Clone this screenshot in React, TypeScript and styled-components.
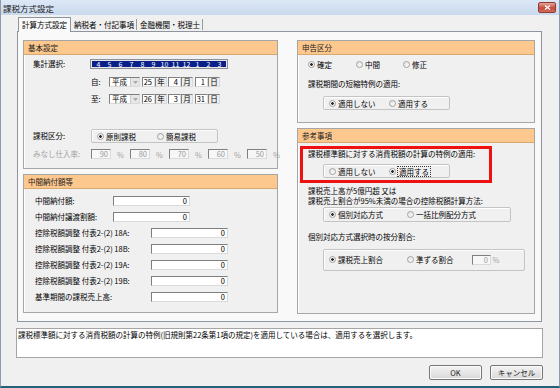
import React from 'react';
import styled, { createGlobalStyle } from 'styled-components';

const GlobalStyle = createGlobalStyle`
  html, body { margin: 0; padding: 0; }
  body {
    font-family: "Noto Sans CJK JP", "Noto Sans", sans-serif;
    font-size: 7.5px;
    color: #000;
    background: #fff;
  }
  * { box-sizing: border-box; }
`;

const Window = styled.div`
  width: 560px;
  height: 388px;
  display: flex;
  flex-direction: column;
  background: #f0f0f0;
  border-left: 1px solid #8e9bab;
  border-right: 1px solid #8e9bab;
  border-bottom: 2px solid #24627c;
`;

const TitleBar = styled.div`
  height: 15px;
  flex: none;
  display: flex;
  align-items: center;
  justify-content: space-between;
  padding: 0 3px 0 2px;
  background: linear-gradient(#dde8f6, #c9d9ed);
  font-size: 8.5px;
  color: #1a1a1a;
`;

const CloseBtn = styled.div`
  width: 18px;
  height: 11px;
  border: 1px solid #8c3a32;
  border-radius: 2px;
  background: linear-gradient(#e3a59a, #c84a3d 55%, #d46d5e);
  display: flex;
  align-items: center;
  justify-content: center;
`;

const Body = styled.div`
  flex: 1;
  display: flex;
  flex-direction: column;
  padding: 2px 16px 0 15px;
`;

const TabStrip = styled.div`
  height: 15px;
  display: flex;
  align-items: flex-end;
  padding-left: 2px;
  margin-bottom: -1px;
  position: relative;
  z-index: 1;
`;

const Tab = styled.div<{ $active?: boolean }>`
  padding: 0 3px;
  white-space: nowrap;
  ${p =>
    p.$active
      ? `height: 15px; line-height: 14px; background: #f9f9f9; border: 1px solid #8f959f; border-bottom: none;`
      : `height: 11px; line-height: 11px; margin-bottom: 2px; border-right: 1px solid #9a9a9a; padding: 0 2px 0 3px;`}
`;

const Panel = styled.div`
  height: 291px;
  margin: 0 1px;
  border: 1px solid #8f959f;
  background: #f9f9f9;
  padding: 8px 6px 0 5px;
  display: flex;
  gap: 19px;
`;

const Column = styled.div<{ $w: number }>`
  width: ${p => p.$w}px;
  display: flex;
  flex-direction: column;
  gap: 5px;
`;

const GroupBox = styled.div<{ $h: number }>`
  height: ${p => p.$h}px;
  border: 1px solid #a6a6a6;
  box-shadow: inset 1px 1px 0 #fff;
  background: #f0f0f0;
  display: flex;
  flex-direction: column;
`;

const GroupHead = styled.div`
  height: 14px;
  line-height: 13px;
  padding-left: 4px;
  background: #fdc88e;
  border-bottom: 1px solid #d9a871;
  color: #222;
`;

const FieldRow = styled.div<{ $mt: number; $h?: number; $pl?: number }>`
  display: flex;
  align-items: center;
  margin-top: ${p => p.$mt}px;
  height: ${p => p.$h ?? 10}px;
  padding-left: ${p => p.$pl ?? 9}px;
  white-space: nowrap;
`;

const Caption = styled.div<{ $w?: number; $dim?: boolean }>`
  flex: none;
  width: ${p => (p.$w ? `${p.$w}px` : 'auto')};
  color: ${p => (p.$dim ? '#a3a3a3' : '#000')};
  line-height: 10px;
`;

const MonthList = styled.div`
  width: 138px;
  height: 10px;
  display: flex;
  background: #0a2089;
  border: 1px solid #8a8f98;
  box-shadow: inset 0 0 0 1px #e8e8e8;
  padding: 1px 2px;
`;

const MonthCell = styled.div`
  flex: 1;
  color: #fff;
  text-align: center;
  line-height: 7px;
  font-size: 7px;
`;

const Sunken = styled.div<{ $w: number; $ml?: number }>`
  width: ${p => p.$w}px;
  height: 10px;
  margin-left: ${p => p.$ml ?? 0}px;
  border: 1px solid;
  border-color: #7f7f7f #dadada #dadada #7f7f7f;
  line-height: 8px;
  flex: none;
`;

const Combo = styled(Sunken)`
  background: #fff;
  display: flex;
  padding-left: 2px;
  justify-content: space-between;
`;

const ComboArrow = styled.div`
  width: 9px;
  background: #e6e6e6;
  border-left: 1px solid #c8c8c8;
  display: flex;
  align-items: center;
  justify-content: center;
`;

const NumBox = styled(Sunken)<{ $off?: boolean }>`
  background: ${p => (p.$off ? '#f7f7f7' : '#fff')};
  color: ${p => (p.$off ? '#9a9a9a' : '#000')};
  text-align: right;
  padding-right: 2px;
`;

const Unit = styled(Sunken)`
  background: #ececec;
  text-align: center;
`;

const Pct = styled.div<{ $w: number }>`
  width: ${p => p.$w}px;
  text-align: center;
  color: #a3a3a3;
  flex: none;
`;

const RadioGroup = styled.div<{ $w: number; $h?: number; $mt: number; $ml: number }>`
  width: ${p => p.$w}px;
  height: ${p => p.$h ?? 14}px;
  margin-top: ${p => p.$mt}px;
  margin-left: ${p => p.$ml}px;
  border: 1px solid #c4c4c4;
  box-shadow: inset 1px 1px 0 #fff;
  border-radius: 2px;
  display: flex;
  align-items: center;
  padding-left: 5px;
  white-space: nowrap;
  flex: none;
`;

const RadioItem = styled.div<{ $w: number }>`
  width: ${p => p.$w}px;
  display: flex;
  align-items: center;
  flex: none;
`;

const RadioDot = styled.span<{ $on?: boolean }>`
  width: 7px;
  height: 7px;
  border-radius: 50%;
  border: 1px solid #a2a2a2;
  background: ${p =>
    p.$on
      ? 'radial-gradient(circle, #2a2a2a 0 1.2px, #f4f4f4 1.5px)'
      : 'linear-gradient(135deg, #e2e2e2, #fdfdfd)'};
  margin-right: 2px;
  flex: none;
`;

const FocusText = styled.span`
  outline: 1px dotted #333;
  outline-offset: 0;
  padding: 0 1px;
  line-height: 9px;
`;

const Highlight = styled.div`
  width: 192px;
  height: 37px;
  margin: 3px 0 0 2px;
  border: 3px solid #ee1111;
  display: flex;
  flex-direction: column;
`;

const Note = styled.div<{ $mt: number }>`
  margin-top: ${p => p.$mt}px;
  padding-left: 10px;
  line-height: 9.5px;
  white-space: nowrap;
`;

const Describe = styled.div`
  height: 30px;
  margin-top: 6px;
  background: #fff;
  border: 1px solid #a5a5a5;
  padding: 1px 0 0 1px;
  line-height: 10px;
  white-space: nowrap;
`;

const Actions = styled.div`
  display: flex;
  justify-content: flex-end;
  gap: 8px;
  margin-top: 7px;
`;

const Button = styled.div`
  width: 53px;
  height: 15px;
  border: 1px solid #767676;
  border-radius: 2px;
  background: linear-gradient(#f3f3f3, #e6e6e6 50%, #d8d8d8);
  box-shadow: inset 0 0 0 1px #fbfbfb;
  text-align: center;
  line-height: 13px;
  color: #222;
`;

const MONTHS = [4, 5, 6, 7, 8, 9, 10, 11, 12, 1, 2, 3];

const INTERIM: [string, number][] = [
  ['中間納付額:', 78],
  ['中間納付譲渡割額:', 78],
  ['控除税額調整 付表2-(2) 18A:', 116],
  ['控除税額調整 付表2-(2) 18B:', 116],
  ['控除税額調整 付表2-(2) 19A:', 116],
  ['控除税額調整 付表2-(2) 19B:', 116],
  ['基準期間の課税売上高:', 116],
];

const Radio = ({ on, w, children }: { on?: boolean; w: number; children: React.ReactNode }) => (
  <RadioItem $w={w}>
    <RadioDot $on={on} />
    {children}
  </RadioItem>
);

const DateRow = ({ mt, label, y, m, d }: { mt: number; label: string; y: string; m: string; d: string }) => (
  <FieldRow $mt={mt}>
    <Caption $w={58} />
    <Caption $w={18}>{label}</Caption>
    <Combo $w={31}>
      平成
      <ComboArrow>
        <svg width="5" height="3" viewBox="0 0 5 3">
          <path d="M0 0h5L2.5 3z" fill="#a8a8a8" />
        </svg>
      </ComboArrow>
    </Combo>
    <NumBox $w={13} $ml={2}>{y}</NumBox>
    <Unit $w={12}>年</Unit>
    <NumBox $w={13} $ml={1}>{m}</NumBox>
    <Unit $w={12}>月</Unit>
    <NumBox $w={13} $ml={2}>{d}</NumBox>
    <Unit $w={12}>日</Unit>
  </FieldRow>
);

const App = () => {
  return (
    <Window>
      <GlobalStyle />
      <TitleBar>
        <span>課税方式設定</span>
        <CloseBtn>
          <svg width="7" height="5" viewBox="0 0 7 5">
            <path d="M1 0.5l5 4M6 0.5l-5 4" stroke="#fff" strokeWidth="1.3" />
          </svg>
        </CloseBtn>
      </TitleBar>
      <Body>
        <TabStrip>
          <Tab $active>計算方式設定</Tab>
          <Tab>納税者・付記事項</Tab>
          <Tab>金融機関・税理士</Tab>
        </TabStrip>
        <Panel>
          <Column $w={255}>
            <GroupBox $h={129}>
              <GroupHead>基本設定</GroupHead>
              <FieldRow $mt={4}>
                <Caption $w={57}>集計選択:</Caption>
                <MonthList>
                  {MONTHS.map(n => (
                    <MonthCell key={n}>{n}</MonthCell>
                  ))}
                </MonthList>
              </FieldRow>
              <DateRow mt={8} label="自:" y="25" m="4" d="1" />
              <DateRow mt={7} label="至:" y="26" m="3" d="31" />
              <FieldRow $mt={25} $h={14}>
                <Caption $w={58}>課税区分:</Caption>
                <RadioGroup $w={127} $mt={0} $ml={0}>
                  <Radio on w={60}>原則課税</Radio>
                  <Radio w={60}>簡易課税</Radio>
                </RadioGroup>
              </FieldRow>
              <FieldRow $mt={6}>
                <Caption $w={58} $dim>みなし仕入率:</Caption>
                {[90, 80, 70, 60, 50].map(v => (
                  <React.Fragment key={v}>
                    <NumBox $w={20} $off>{v}</NumBox>
                    <Pct $w={19}>%</Pct>
                  </React.Fragment>
                ))}
              </FieldRow>
            </GroupBox>
            <GroupBox $h={139}>
              <GroupHead>中間納付額等</GroupHead>
              {INTERIM.map(([label, w], i) => (
                <FieldRow key={label} $mt={i === 0 ? 7 : 6} $pl={11}>
                  <Caption $w={w}>{label}</Caption>
                  <NumBox $w={77}>0</NumBox>
                </FieldRow>
              ))}
            </GroupBox>
          </Column>
          <Column $w={238}>
            <GroupBox $h={83}>
              <GroupHead>申告区分</GroupHead>
              <FieldRow $mt={4} $pl={10}>
                <Radio on w={48}>確定</Radio>
                <Radio w={47}>中間</Radio>
                <Radio w={48}>修正</Radio>
              </FieldRow>
              <FieldRow $mt={10} $pl={10}>
                <Caption>課税期間の短縮特例の適用:</Caption>
              </FieldRow>
              <RadioGroup $w={127} $mt={7} $ml={25}>
                <Radio on w={60}>適用しない</Radio>
                <Radio w={60}>適用する</Radio>
              </RadioGroup>
            </GroupBox>
            <GroupBox $h={186}>
              <GroupHead>参考事項</GroupHead>
              <Highlight>
                <FieldRow $mt={0} $pl={5}>
                  <Caption>課税標準額に対する消費税額の計算の特例の適用:</Caption>
                </FieldRow>
                <RadioGroup $w={127} $mt={5} $ml={20}>
                  <Radio w={60}>適用しない</Radio>
                  <Radio on w={60}>
                    <FocusText>適用する</FocusText>
                  </Radio>
                </RadioGroup>
              </Highlight>
              <Note $mt={3}>
                課税売上高が5億円超 又は
                <br />
                課税売上割合が95%未満の場合の控除税額計算方法:
              </Note>
              <RadioGroup $w={188} $h={15} $mt={2} $ml={25}>
                <Radio on w={78}>個別対応方式</Radio>
                <Radio w={100}>一括比例配分方式</Radio>
              </RadioGroup>
              <Note $mt={10}>個別対応方式選択時の按分割合:</Note>
              <RadioGroup $w={202} $h={22} $mt={7} $ml={25}>
                <Radio on w={78}>課税売上割合</Radio>
                <Radio w={65}>準ずる割合</Radio>
                <NumBox $w={19} $off>0</NumBox>
                <Pct $w={10}>%</Pct>
              </RadioGroup>
            </GroupBox>
          </Column>
        </Panel>
        <Describe>
          課税標準額に対する消費税額の計算の特例(旧規則第22条第1項の規定)を適用している場合は、適用するを選択します。
        </Describe>
        <Actions>
          <Button>OK</Button>
          <Button>キャンセル</Button>
        </Actions>
      </Body>
    </Window>
  );
};

export default App;
